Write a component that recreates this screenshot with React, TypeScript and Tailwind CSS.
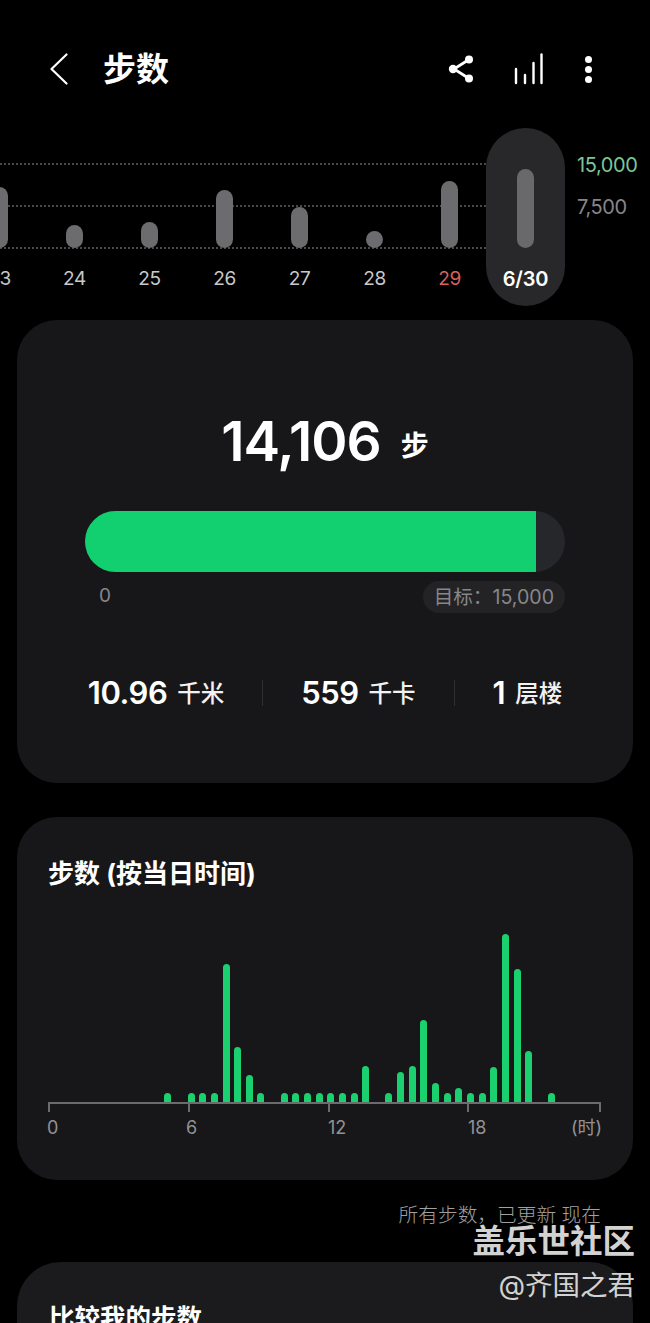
const days = [
    { label: "23", height: 61 },
    { label: "24", height: 23 },
    { label: "25", height: 26 },
    { label: "26", height: 58 },
    { label: "27", height: 41 },
    { label: "28", height: 17 },
    { label: "29", height: 67, red: true },
];

// one entry per half hour slot, 0 = empty
const hourly = [9, 0, 9, 9, 9, 138, 55, 27, 9, 0, 9, 9, 9, 9, 9, 9, 9, 36, 0, 9, 30, 36, 82, 19, 9, 14, 9, 9, 35, 168, 133, 51, 0, 9];

function BackIcon() {
    return (
        <svg width="20" height="32" viewBox="0 0 20 32" fill="none">
            <path d="M17.5 1.5 2.5 16l15 14.5" stroke="white" strokeWidth="2.2" strokeLinecap="round" strokeLinejoin="round" />
        </svg>
    );
}

function ShareIcon() {
    return (
        <svg width="27" height="30" viewBox="0 0 27 30" fill="none">
            <path d="M21 5.5 6 15l15 9.5" stroke="white" strokeWidth="2.8" />
            <circle cx="21" cy="5.5" r="4" fill="white" />
            <circle cx="5" cy="15" r="4.2" fill="white" />
            <circle cx="21" cy="24.5" r="4" fill="white" />
        </svg>
    );
}

function StatsIcon() {
    return (
        <svg width="30" height="32" viewBox="0 0 30 32" fill="none" stroke="white" strokeWidth="2.4" strokeLinecap="round">
            <path d="M2 30V16" />
            <path d="M11 30V22" />
            <path d="M19.5 30V10" />
            <path d="M27.5 30V1.5" />
        </svg>
    );
}

function Stat({ value, unit }: { value: string; unit: string }) {
    return (
        <div className="flex items-center gap-[10px]">
            <span className="text-[31px] font-semibold tracking-[-0.5px] text-white">{value}</span>
            <span className="mt-[1px] text-[23.5px] font-medium text-[#f2f2f2]">{unit}</span>
        </div>
    );
}

export default function App() {
    return (
        <div className="relative h-[1323px] w-[650px] overflow-hidden bg-black font-['Inter','Noto_Sans_CJK_SC',sans-serif] text-white">
            {/* Header */}
            <header className="flex h-[128px] items-start pt-[44px]">
                <div className="flex h-[50px] w-full items-center pl-[49px] pr-[58px]">
                    <BackIcon />
                    <h1 className="ml-[34px] text-[33px] font-bold leading-none">步数</h1>
                    <div className="ml-auto flex items-center">
                        <ShareIcon />
                        <div className="ml-[39px]"><StatsIcon /></div>
                        <div className="ml-[41px] flex flex-col gap-[3px]">
                            <span className="h-[7px] w-[7px] rounded-full bg-white" />
                            <span className="h-[7px] w-[7px] rounded-full bg-white" />
                            <span className="h-[7px] w-[7px] rounded-full bg-white" />
                        </div>
                    </div>
                </div>
            </header>

            {/* Daily chart */}
            <section className="relative flex h-[178px]">
                <div className="absolute left-0 top-[35px] w-[486px] border-t-2 border-dotted border-[#4a4a4c]" />
                <div className="absolute left-0 top-[77px] w-[486px] border-t-2 border-dotted border-[#4a4a4c]" />
                <div className="absolute left-0 top-[119px] w-[486px] border-t-2 border-dotted border-[#4a4a4c]" />
                <div className="absolute left-[577px] top-[23px] text-[20px] leading-[28px] tracking-[-0.4px] text-[#7cc598]">15,000</div>
                <div className="absolute left-[577px] top-[65px] text-[20px] leading-[28px] tracking-[-0.4px] text-[#86868a]">7,500</div>

                <div className="relative -ml-[38px] flex">
                    {days.map(d => (
                        <div key={d.label} className="flex w-[75px] flex-col items-center">
                            <div className="flex h-[120px] items-end">
                                <div className="w-[17px] rounded-full bg-[#6c6c6f]" style={{ height: d.height }} />
                            </div>
                            <span className={`mt-[18px] text-[19px] leading-[26px] tracking-[-0.4px] ${d.red ? "text-[#d9615f]" : "text-[#c9c9c9]"}`}>{d.label}</span>
                        </div>
                    ))}
                    <div className="ml-[-1px] flex h-[178px] w-[79px] flex-col items-center rounded-full bg-[#28282a]">
                        <div className="flex h-[120px] items-end">
                            <div className="h-[79px] w-[17px] rounded-full bg-[#69696c]" />
                        </div>
                        <span className="mt-[18px] text-[20px] font-semibold leading-[26px] tracking-[-0.2px] text-white">6/30</span>
                    </div>
                </div>
            </section>

            {/* Today summary */}
            <section className="mx-[17px] mt-[14px] h-[463px] rounded-[40px] bg-[#17171a] px-[68px] pt-[84px]">
                <div className="flex h-[74px] items-center justify-center">
                    <span className="text-[55px] font-semibold leading-[74px] tracking-[-1px]">14,106</span>
                    <span className="ml-[20px] mt-[10px] text-[28px] font-bold leading-none">步</span>
                </div>
                <div className="mt-[33px] flex h-[61px] overflow-hidden rounded-full bg-[#26272a]">
                    <div className="h-full bg-[#12d070]" style={{ width: `${(14106 / 15000) * 100}%` }} />
                </div>
                <div className="mt-[9px] flex items-start justify-between">
                    <span className="ml-[14px] mt-[2px] text-[19px] leading-[26px] text-[#87878a]">0</span>
                    <span className="flex h-[32px] items-center rounded-full bg-[#232326] px-[11px] pt-[2px] text-[19.6px] text-[#87878a]">目标：15,000</span>
                </div>
                <div className="mt-[57px] flex items-center justify-center gap-[38px]">
                    <Stat value="10.96" unit="千米" />
                    <div className="h-[26px] w-px bg-[#2e2e30]" />
                    <Stat value="559" unit="千卡" />
                    <div className="h-[26px] w-px bg-[#2e2e30]" />
                    <Stat value="1" unit="层楼" />
                </div>
            </section>

            {/* Steps by hour */}
            <section className="mx-[17px] mt-[34px] h-[363px] rounded-[40px] bg-[#17171a] px-[31px] pt-[39px]">
                <h2 className="text-[26px] font-bold leading-[36px]">步数 (按当日时间)</h2>
                <div className="mt-[41px] flex h-[169px] items-end pl-[114px]">
                    {hourly.map((h, i) => (
                        <div key={i} className="flex w-[11.65px] shrink-0 justify-center">
                            {h > 0 && <div className="w-[7px] rounded-t-full bg-[#1bd16f]" style={{ height: h }} />}
                        </div>
                    ))}
                </div>
                <div className="flex h-[9px] w-[553px] border-t-2 border-[#6c6c6e]">
                    <span className="h-[8px] w-[140px] border-l-2 border-[#6c6c6e]" />
                    <span className="h-[8px] w-[140px] border-l-2 border-[#6c6c6e]" />
                    <span className="h-[8px] w-[139px] border-l-2 border-[#6c6c6e]" />
                    <span className="h-[8px] flex-1 border-x-2 border-[#6c6c6e]" />
                </div>
                <div className="-ml-px mt-[5px] flex text-[18px] leading-[24px] text-[#929294]">
                    <span className="w-[139px]">0</span>
                    <span className="w-[142px]">6</span>
                    <span className="w-[140px]">12</span>
                    <span className="w-[103px]">18</span>
                    <span>(时)</span>
                </div>
            </section>

            <p className="mt-[21px] w-[601px] text-right text-[19.7px] font-light leading-[28px] text-[#a0a0a2]">所有步数，已更新 现在</p>

            {/* Compare card, cut off by the screen */}
            <section className="mx-[17px] mt-[33px] h-[200px] rounded-[44px] bg-[#1b1b1d] px-[32px] pt-[38px]">
                <h2 className="text-[25.5px] font-bold leading-[36px]">比较我的步数</h2>
            </section>

            {/* Watermark */}
            <div className="absolute right-[15px] top-[1222px] flex flex-col items-end text-[#d2d2d2]">
                <span className="text-[32.5px] font-bold leading-[40px]">盖乐世社区</span>
                <span className="mt-[3px] text-[27.5px] leading-[40px]">@齐国之君</span>
            </div>
        </div>
    );
}
